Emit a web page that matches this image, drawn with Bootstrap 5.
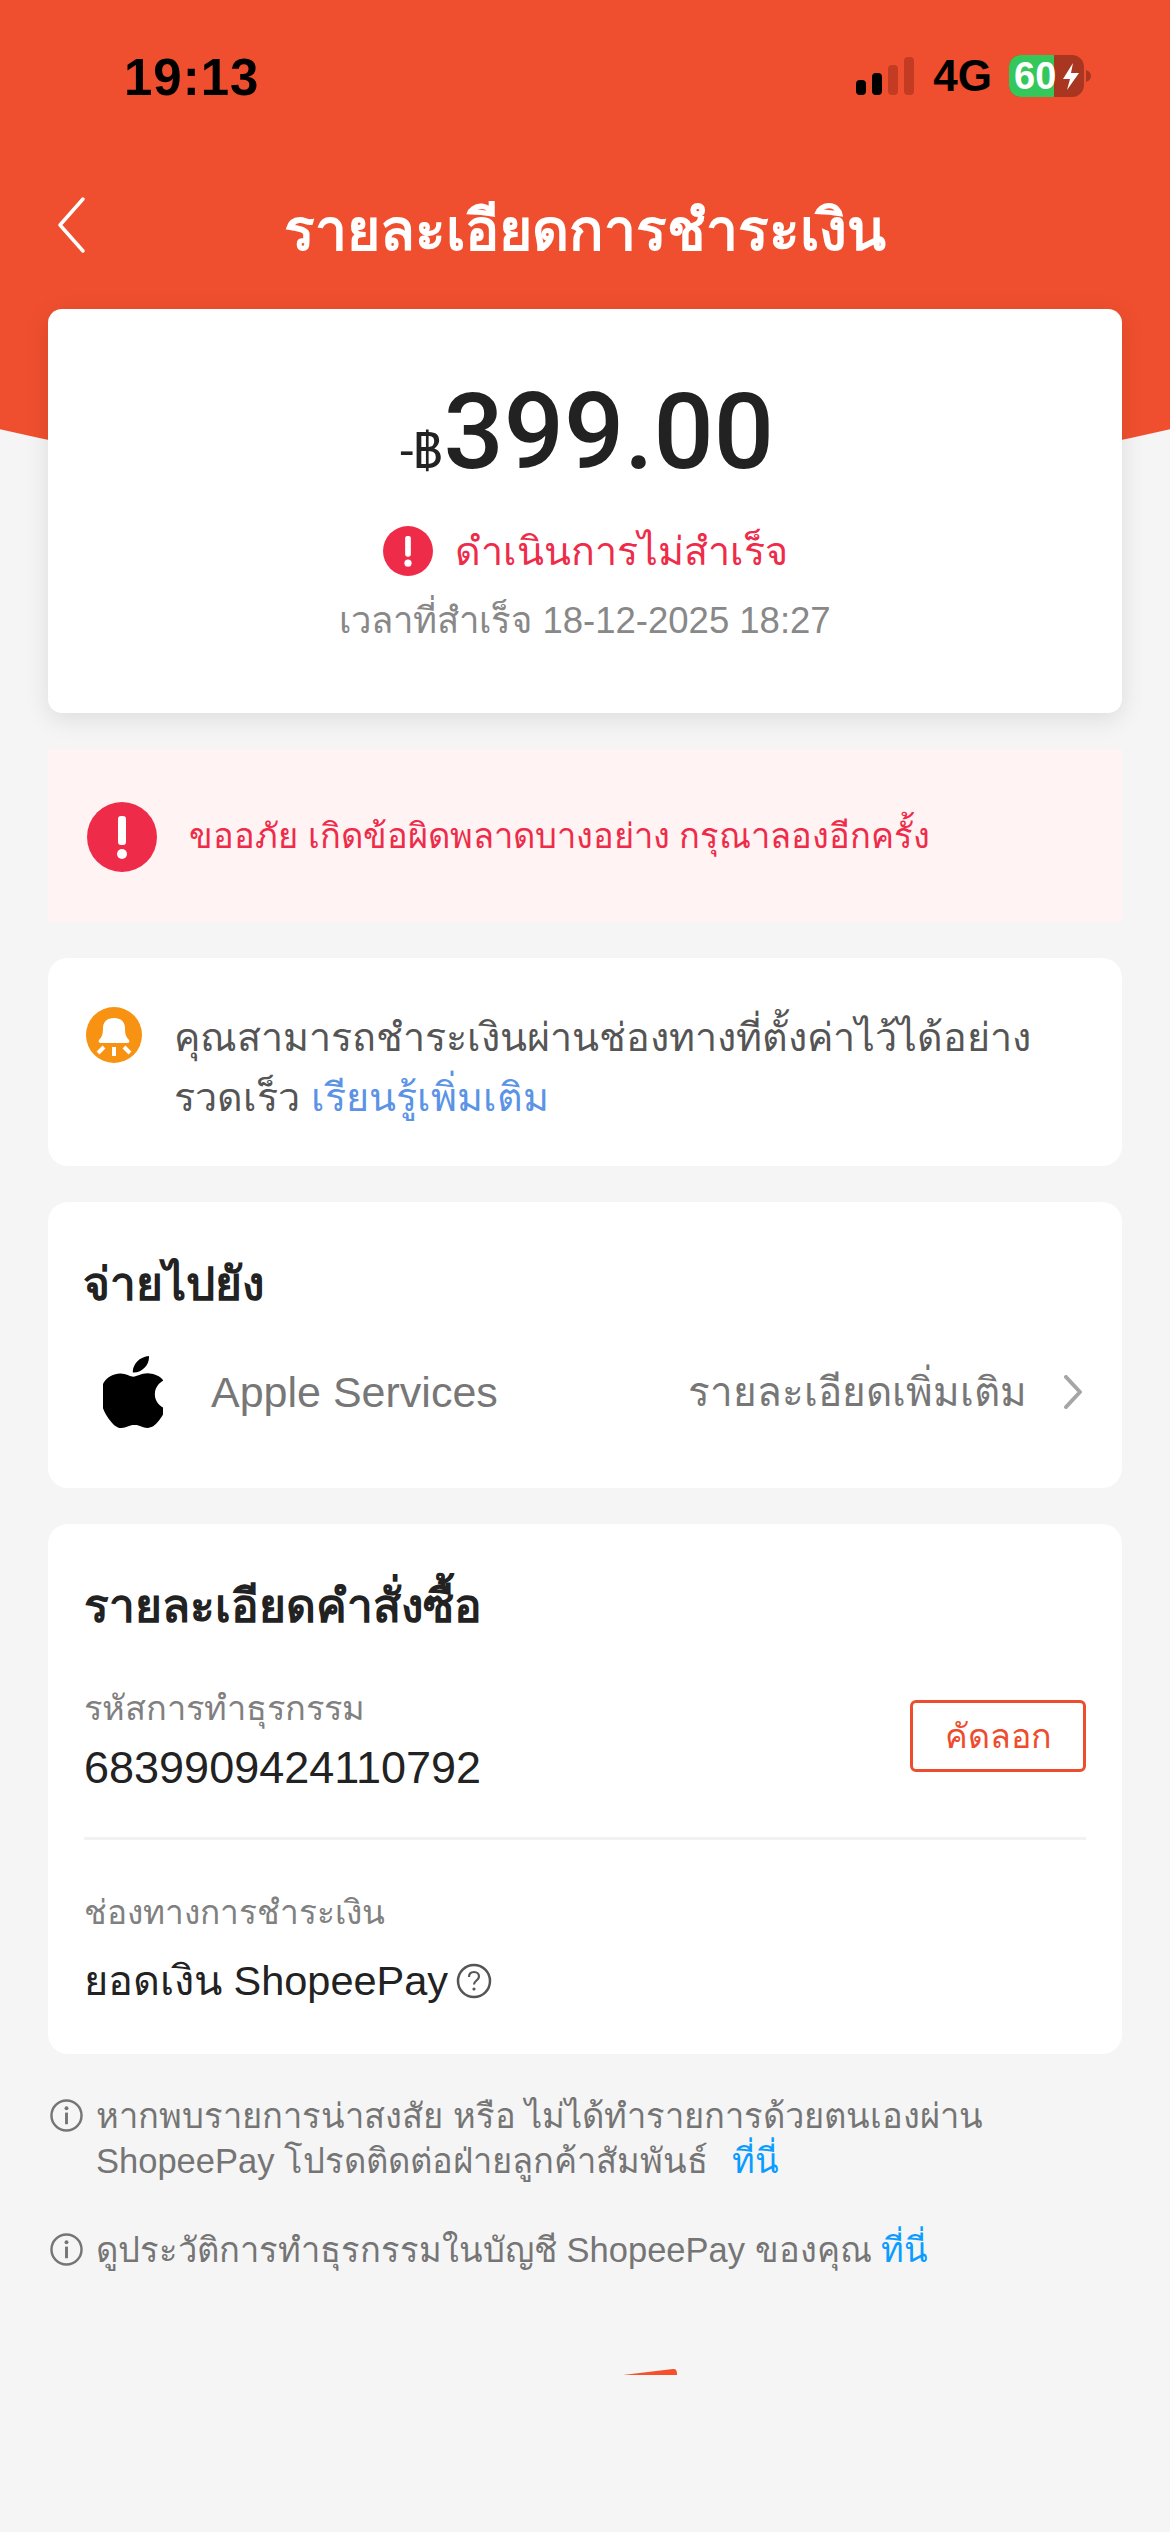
<!DOCTYPE html>
<html lang="th">
<head>
    <meta charset="UTF-8">
    <meta name="viewport" content="width=device-width, initial-scale=1.0">
    <title>รายละเอียดการชำระเงิน</title>
    <link href="https://cdn.jsdelivr.net/npm/bootstrap@5.3.0/dist/css/bootstrap.min.css" rel="stylesheet">
    <style>
        body {
            background: #f5f5f5;
            font-family: "Liberation Sans", "Noto Sans", "DejaVu Sans", sans-serif;
            color: #222;
        }
        .top-bg {
            height: 496px;
            background: #ef4f2e;
            clip-path: circle(2600px at 50% -2104px);
            margin-bottom: -187px;
        }
        .status-row {
            height: 178px;
            padding: 51px 79px 0 124px;
        }
        .clock { font-size: 51px; font-weight: 700; color: #000; line-height: 54px; letter-spacing: 1px; }
        .net { font-size: 44px; font-weight: 700; color: #000; line-height: 50px; margin: 0 17px 0 19px; }
        .title-row { height: 94px; padding-left: 56px; }
        .title-text { color: #fff; font-size: 57px; font-weight: 700; line-height: 94px; margin-top: 10px; }
        .title-spacer { width: 86px; }
        .page-body { padding: 0 48px; gap: 36px; }
        .sheet { background: #fff; border: 0; border-radius: 20px; }
        .sheet-main { height: 404px; border-radius: 14px; box-shadow: 0 6px 24px rgba(0, 0, 0, .1); }
        .amount { font-family: Roboto, "Liberation Sans", sans-serif; font-size: 106px; font-weight: 500; line-height: 120px; margin: 63px 0 0 4px; }
        .amount-cur { font-size: 49px; font-weight: 400; }
        .fail-row { color: #ee2c4a; font-size: 39.5px; line-height: 50px; gap: 22px; margin-top: 14px; }
        .fail-time { color: #888; font-size: 36.5px; line-height: 50px; margin-top: 20px; }
        .alert-box { height: 173px; background: #fff4f3; padding: 2px 0 0 39px; gap: 32px; color: #ee2c4a; font-size: 34.5px; }
        .tip-box { height: 208px; padding: 49px 38px 0; gap: 32px; font-size: 39.5px; line-height: 60px; color: #555; white-space: nowrap; }
        .tip-link { color: #5b93e6; }
        .pay-box { height: 286px; padding: 46px 35px 0; }
        .sec-title { font-size: 46px; font-weight: 700; line-height: 72px; }
        .pay-row { height: 90px; margin-top: 27px; padding-left: 20px; }
        .pay-name { font-size: 43px; color: #777; margin-left: 48px; }
        .pay-more { font-size: 40.5px; color: #777; margin-right: 36px; }
        .order-box { height: 530px; padding: 46px 36px 0; }
        .order-top { margin-top: 41px; }
        .info-label { font-size: 34.4px; color: #808080; line-height: 50px; }
        .info-label-alt { font-size: 33.4px; }
        .info-value { font-size: 45px; line-height: 60px; margin-top: 5px; }
        .info-value-alt { font-size: 41.5px; margin-top: 13px; }
        .copy-btn {
            width: 176px; height: 72px; padding: 0; margin-bottom: 10px;
            border: 3px solid #ee4d2d; border-radius: 6px;
            color: #ee4d2d; font-size: 34px; line-height: 1;
            background: #fff;
        }
        .order-line { border-top: 3px solid #f2f2f2; margin: 39px 0 48px; }
        .note-list { padding: 0 48px 0 50px; margin-top: 40px; gap: 44px; }
        .note-row { gap: 13px; font-size: 34.5px; line-height: 45px; color: #757575; white-space: nowrap; }
        .note-ico { margin-top: 5px; flex: none; }
        .note-link { color: #0a9cff; }
        .note-link-gap { margin-left: 14px; }
        .sliver { display: block; margin: 96px 0 0 623px; }
    </style>
</head>
<body>
    <div class="top-bg">
        <div class="status-row d-flex justify-content-between align-items-start">
            <div class="clock">19:13</div>
            <div class="d-flex align-items-center">
                <svg width="58" height="38" viewBox="0 0 58 38">
                    <rect x="0" y="23" width="10" height="15" rx="4" fill="#000"/>
                    <rect x="16" y="16" width="10" height="22" rx="4" fill="#000"/>
                    <rect x="32" y="8" width="10" height="30" rx="4" fill="#c23b22"/>
                    <rect x="48" y="0" width="10" height="38" rx="4" fill="#c23b22"/>
                </svg>
                <span class="net">4G</span>
                <svg width="82" height="42" viewBox="0 0 82 42">
                    <rect width="75" height="42" rx="12" fill="#a93620"/>
                    <path d="M12 0H45V42H12A12 12 0 0 1 0 30V12A12 12 0 0 1 12 0Z" fill="#34c759"/>
                    <path d="M77 15c3 1 5 3 5 6s-2 5-5 6Z" fill="#a93620"/>
                    <text x="5" y="34" font-family="Liberation Sans" font-size="38" font-weight="700" fill="#fff">60</text>
                    <path d="M64 8 54 24h7l-3 11 12-17h-8Z" fill="#fff"/>
                </svg>
            </div>
        </div>
        <div class="title-row d-flex align-items-center">
            <svg width="30" height="58" viewBox="0 0 30 58">
                <path d="M27 3 4 29l23 26" fill="none" stroke="#fff" stroke-width="3.5" stroke-linecap="round" stroke-linejoin="round"/>
            </svg>
            <div class="title-text flex-grow-1 text-center">รายละเอียดการชำระเงิน</div>
            <div class="title-spacer"></div>
        </div>
    </div>

    <div class="page-body d-flex flex-column">
        <div class="card sheet sheet-main align-items-center">
            <div class="amount"><span class="amount-cur">-฿</span>399.00</div>
            <div class="fail-row d-flex align-items-center">
                <svg width="50" height="50" viewBox="0 0 70 70">
                    <circle cx="35" cy="35" r="35" fill="#ee2c4a"/>
                    <rect x="31" y="14" width="8" height="29" rx="3" fill="#fff"/>
                    <circle cx="35" cy="52" r="5" fill="#fff"/>
                </svg>
                <span>ดำเนินการไม่สำเร็จ</span>
            </div>
            <div class="fail-time">เวลาที่สำเร็จ 18-12-2025 18:27</div>
        </div>

        <div class="alert-box d-flex align-items-center">
            <svg width="70" height="70" viewBox="0 0 70 70">
                <circle cx="35" cy="35" r="35" fill="#ee2c4a"/>
                <rect x="31" y="14" width="8" height="29" rx="3" fill="#fff"/>
                <circle cx="35" cy="52" r="5" fill="#fff"/>
            </svg>
            <span>ขออภัย เกิดข้อผิดพลาดบางอย่าง กรุณาลองอีกครั้ง</span>
        </div>

        <div class="card sheet tip-box flex-row align-items-start">
            <svg width="56" height="56" viewBox="0 0 56 56">
                <circle cx="28" cy="28" r="28" fill="#f79212"/>
                <path d="M13 33c3-3 4-6 4-12 0-6 4-10 11-10s11 4 11 10c0 6 1 9 4 12 1 2 0 3-2 3H15c-2 0-3-1-2-3Z" fill="#fff"/>
                <path d="M28 40v9M18 40l-6 6M38 40l6 6" stroke="#fff" stroke-width="4"/>
            </svg>
            <div>คุณสามารถชำระเงินผ่านช่องทางที่ตั้งค่าไว้ได้อย่าง<br>รวดเร็ว <span class="tip-link">เรียนรู้เพิ่มเติม</span></div>
        </div>

        <div class="card sheet pay-box">
            <div class="sec-title">จ่ายไปยัง</div>
            <div class="pay-row d-flex align-items-center">
                <svg width="60" height="72" viewBox="3 0 18 24" preserveAspectRatio="none">
                    <path d="M12.152 6.896c-.948 0-2.415-1.078-3.96-1.04-2.04.027-3.91 1.183-4.961 3.014-2.117 3.675-.546 9.103 1.519 12.09 1.013 1.454 2.208 3.09 3.792 3.039 1.52-.065 2.09-.987 3.935-.987 1.831 0 2.35.987 3.96.948 1.637-.026 2.676-1.48 3.676-2.948 1.156-1.688 1.636-3.325 1.662-3.415-.039-.013-3.182-1.221-3.22-4.857-.026-3.04 2.48-4.494 2.597-4.559-1.429-2.09-3.623-2.324-4.39-2.376-2-.156-3.675 1.09-4.61 1.09zM15.53 3.83c.843-1.012 1.4-2.427 1.245-3.83-1.207.052-2.662.805-3.532 1.818-.78.896-1.454 2.338-1.273 3.714 1.338.104 2.715-.688 3.559-1.701"/>
                </svg>
                <span class="pay-name flex-grow-1">Apple Services</span>
                <span class="pay-more">รายละเอียดเพิ่มเติม</span>
                <svg width="20" height="34" viewBox="0 0 20 34" class="me-1">
                    <path d="M3 2l14 15L3 32" fill="none" stroke="#a6a6a6" stroke-width="4" stroke-linecap="round" stroke-linejoin="round"/>
                </svg>
            </div>
        </div>

        <div class="card sheet order-box">
            <div class="sec-title">รายละเอียดคำสั่งซื้อ</div>
            <div class="order-top d-flex justify-content-between align-items-center">
                <div>
                    <div class="info-label">รหัสการทำธุรกรรม</div>
                    <div class="info-value">6839909424110792</div>
                </div>
                <button class="btn copy-btn">คัดลอก</button>
            </div>
            <div class="order-line"></div>
            <div class="info-label info-label-alt">ช่องทางการชำระเงิน</div>
            <div class="info-value info-value-alt d-flex align-items-center gap-2">
                <span>ยอดเงิน ShopeePay</span>
                <svg width="36" height="36" viewBox="0 0 36 36">
                    <circle cx="18" cy="18" r="16" fill="none" stroke="#555" stroke-width="2.5"/>
                    <path d="M13 14c0-3 2-5 5-5s5 2 5 4.500c0 4-5 4-5 8" fill="none" stroke="#555" stroke-width="2.2"/>
                    <circle cx="18" cy="26" r="1.600" fill="#555"/>
                </svg>
            </div>
        </div>
    </div>

    <div class="note-list d-flex flex-column">
        <div class="note-row d-flex align-items-start">
            <svg class="note-ico" width="33" height="33" viewBox="0 0 34 34">
                <circle cx="17" cy="17" r="15.500" fill="none" stroke="#757575" stroke-width="2.5"/>
                <rect x="15.500" y="14" width="3" height="12" fill="#757575"/>
                <circle cx="17" cy="9.500" r="2" fill="#757575"/>
            </svg>
            <div>หากพบรายการน่าสงสัย หรือ ไม่ได้ทำรายการด้วยตนเองผ่าน<br>ShopeePay โปรดติดต่อฝ่ายลูกค้าสัมพันธ์ <span class="note-link note-link-gap">ที่นี่</span></div>
        </div>
        <div class="note-row d-flex align-items-start">
            <svg class="note-ico" width="33" height="33" viewBox="0 0 34 34">
                <circle cx="17" cy="17" r="15.500" fill="none" stroke="#757575" stroke-width="2.5"/>
                <rect x="15.500" y="14" width="3" height="12" fill="#757575"/>
                <circle cx="17" cy="9.500" r="2" fill="#757575"/>
            </svg>
            <div>ดูประวัติการทำธุรกรรมในบัญชี ShopeePay ของคุณ <span class="note-link">ที่นี่</span></div>
        </div>
    </div>

    <svg class="sliver" width="54" height="6" viewBox="0 0 54 6">
        <path d="M0 6 50 0c3 0 4 1 4 6Z" fill="#f4512c"/>
    </svg>

    <script src="https://cdn.jsdelivr.net/npm/bootstrap@5.3.0/dist/js/bootstrap.bundle.min.js"></script>
</body>
</html>
